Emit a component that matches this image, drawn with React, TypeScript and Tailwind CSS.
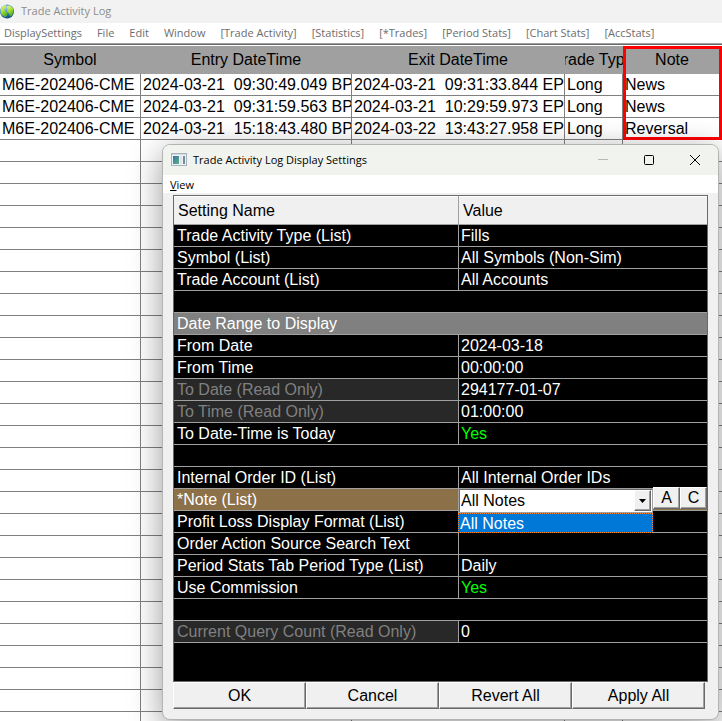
import type { ReactNode } from "react";

const menus = [
  "DisplaySettings",
  "File",
  "Edit",
  "Window",
  "[Trade Activity]",
  "[Statistics]",
  "[*Trades]",
  "[Period Stats]",
  "[Chart Stats]",
  "[AccStats]",
];

const columns = ["Symbol", "Entry DateTime", "Exit DateTime", "Trade Type", "Note"];

const trades = [
  ["M6E-202406-CME", "2024-03-21  09:30:49.049 BP", "2024-03-21  09:31:33.844 EP", "Long", "News"],
  ["M6E-202406-CME", "2024-03-21  09:31:59.563 BP", "2024-03-21  10:29:59.973 EP", "Long", "News"],
  ["M6E-202406-CME", "2024-03-21  15:18:43.480 BP", "2024-03-22  13:43:27.958 EP", "Long", "Reversal"],
];

const blankRows = Array.from({ length: 27 }, () => ["", "", "", "", ""]);

type Setting = {
  name?: string;
  value?: ReactNode;
  kind?: "section" | "blank" | "readonly" | "selected";
  on?: boolean;
};

const settings: Setting[] = [
  { name: "Trade Activity Type (List)", value: "Fills" },
  { name: "Symbol (List)", value: "All Symbols (Non-Sim)" },
  { name: "Trade Account (List)", value: "All Accounts" },
  { kind: "blank" },
  { kind: "section", name: "Date Range to Display" },
  { name: "From Date", value: "2024-03-18" },
  { name: "From Time", value: "00:00:00" },
  { name: "To Date (Read Only)", value: "294177-01-07", kind: "readonly" },
  { name: "To Time (Read Only)", value: "01:00:00", kind: "readonly" },
  { name: "To Date-Time is Today", value: "Yes", on: true },
  { kind: "blank" },
  { name: "Internal Order ID (List)", value: "All Internal Order IDs" },
  { name: "*Note (List)", kind: "selected" },
  { name: "Profit Loss Display Format (List)", value: "" },
  { name: "Order Action Source Search Text", value: "" },
  { name: "Period Stats Tab Period Type (List)", value: "Daily" },
  { name: "Use Commission", value: "Yes", on: true },
  { kind: "blank" },
  { name: "Current Query Count (Read Only)", value: "0", kind: "readonly" },
];

const uiFont = "font-['Segoe_UI','Open_Sans',sans-serif]";
const bevel =
  "border border-t-white border-l-white border-r-[#696969] border-b-[#696969] bg-[#f0f0f0] text-black shadow-[inset_-1px_-1px_0_#a0a0a0]";

function GlobeIcon() {
  return (
    <svg className="h-4 w-4" viewBox="0 0 16 16" aria-hidden="true">
      <defs>
        <radialGradient id="globe" cx="0.3" cy="0.2" r="0.9">
          <stop offset="0" stopColor="#c4e4f8" />
          <stop offset="0.4" stopColor="#3f92d0" />
          <stop offset="1" stopColor="#0c3c78" />
        </radialGradient>
        <linearGradient id="land" x1="0" y1="0" x2="0.4" y2="1">
          <stop offset="0" stopColor="#f0f69a" />
          <stop offset="0.5" stopColor="#b4e03a" />
          <stop offset="1" stopColor="#4fae26" />
        </linearGradient>
      </defs>
      <circle cx="7" cy="7.500" r="7" fill="url(#globe)" />
      <path d="M1 4.500C2 2.500 4 1 6 1L5.500 3.500 4 5 5 7 7.500 9 7 11.500 5 13.500 1.500 10.500C0.500 8 0.500 6 1 4.500Z" fill="url(#land)" />
      <path d="M6.500 2.500L9.500 1.200C12.500 2.500 13.800 5 13.500 8L12 11.500 10 12.500 9 9.500 7 7.500 7.500 5Z" fill="url(#land)" />
    </svg>
  );
}

function AppIcon() {
  return (
    <svg className="h-[14px] w-4" viewBox="0 0 16 14" aria-hidden="true">
      <defs>
        <linearGradient id="pane" x1="0" y1="0" x2="1" y2="1">
          <stop offset="0" stopColor="#3b6ea8" />
          <stop offset="1" stopColor="#5cb487" />
        </linearGradient>
      </defs>
      <rect x="0.500" y="0.500" width="15" height="12" fill="#eef2f6" stroke="#a9b3bd" />
      <rect x="1" y="1" width="14" height="1" fill="#d3dae2" />
      <rect x="2" y="3" width="6" height="8" fill="url(#pane)" />
      <rect x="9" y="3" width="2" height="8" fill="#dfe5ea" />
      <rect x="12" y="3" width="2" height="8" fill="#6f8f96" />
    </svg>
  );
}

function TradeTable() {
  return (
    <table className="w-full table-fixed border-collapse text-base leading-[21px]">
      <colgroup>
        <col className="w-[141px]" />
        <col className="w-[211px]" />
        <col className="w-[213px]" />
        <col className="w-[58px]" />
        <col />
      </colgroup>
      <thead>
        <tr className="h-7 bg-[#a0a0a0]">
          {columns.map((c) => (
            <th key={c} className="p-0 font-normal">
              <div className="flex justify-center overflow-hidden pr-px leading-5 whitespace-nowrap">
                <span className="shrink-0">{c}</span>
              </div>
            </th>
          ))}
        </tr>
      </thead>
      <tbody>
        {[...trades, ...blankRows].map((row, i) => (
          <tr key={i}>
            {row.map((cell, j) => (
              <td key={j} className="p-0">
                <div
                  className={`h-[22px] overflow-hidden border-b border-[#808080] pl-[2px] whitespace-pre ${
                    j < 4 ? "border-r" : ""
                  }`}
                >
                  {cell}
                </div>
              </td>
            ))}
          </tr>
        ))}
      </tbody>
    </table>
  );
}

function NotePicker() {
  return (
    <div className="relative flex h-[21px] bg-[#8b7048]">
      <div className="absolute -top-px right-0 left-0 flex">
        <div className="relative -ml-px w-[195px]">
          <select
            id="note-list"
            className="block h-[25px] w-full appearance-none border border-[#a0a0a0] bg-white pl-[2px] text-base leading-[21px] text-black shadow-[inset_1px_1px_0_#696969]"
          >
            <option>All Notes</option>
          </select>
          <div className={`pointer-events-none absolute top-[2px] right-[2px] flex h-[21px] w-[17px] items-center justify-center ${bevel}`}>
            <svg className="h-1 w-[7px]" viewBox="0 0 7 4" aria-hidden="true">
              <path d="M0 0H7L3.500 4Z" fill="#000" />
            </svg>
          </div>
          <ul className="absolute top-[25px] left-0 w-full" role="listbox" aria-label="Note choices">
            <li
              role="option"
              aria-selected="true"
              className="h-5 border border-dotted border-[#ff8728] bg-[#0078d7] pl-px leading-5 text-white"
            >
              All Notes
            </li>
          </ul>
        </div>
        <button type="button" className={`-mt-px h-[22px] w-[27px] text-base leading-5 ${bevel}`}>
          A
        </button>
        <button type="button" className={`-mt-px h-[22px] flex-1 text-base leading-5 ${bevel}`}>
          C
        </button>
      </div>
    </div>
  );
}

function SettingsTable() {
  return (
    <table className="w-full table-fixed border-collapse text-base leading-[21px] text-white">
      <colgroup>
        <col className="w-[285px]" />
        <col />
      </colgroup>
      <thead>
        <tr className="bg-[#f0f0f0] text-left text-black">
          <th className="p-0 font-normal">
            <div className="h-[29px] border-r border-b border-[#a0a0a0] pl-1 leading-[30px] shadow-[inset_0_1px_0_#fff]">Setting Name</div>
          </th>
          <th className="p-0 font-normal">
            <div className="h-[29px] border-b border-[#a0a0a0] pl-1 leading-[30px] shadow-[inset_0_1px_0_#fff]">Value</div>
          </th>
        </tr>
      </thead>
      <tbody>
        {settings.map((s, i) => {
          if (s.kind === "blank" || s.kind === "section") {
            return (
              <tr key={i}>
                <td colSpan={2} className="p-0">
                  <div className={`h-[22px] border-b border-[#a0a0a0] pl-[3px] ${s.kind === "section" ? "bg-[#808080]" : ""}`}>
                    {s.name}
                  </div>
                </td>
              </tr>
            );
          }
          const tone =
            s.kind === "readonly" ? "bg-[#282828] text-[#808080]" : s.kind === "selected" ? "bg-[#8b7048]" : "";
          return (
            <tr key={i}>
              <td className="p-0">
                <div className={`h-[22px] border-r border-b border-[#a0a0a0] pl-[3px] ${tone}`}>
                  {s.kind === "selected" ? <label htmlFor="note-list">{s.name}</label> : s.name}
                </div>
              </td>
              <td className="p-0">
                {s.kind === "selected" ? (
                  <div className="h-[22px] border-b border-[#a0a0a0]">
                    <NotePicker />
                  </div>
                ) : (
                  <div className={`h-[22px] border-b border-[#a0a0a0] pl-[2px] ${s.on ? "text-[#00ff00]" : ""}`}>{s.value}</div>
                )}
              </td>
            </tr>
          );
        })}
      </tbody>
    </table>
  );
}

function SettingsDialog() {
  return (
    <section
      role="dialog"
      aria-label="Trade Activity Log Display Settings"
      className="absolute top-[144px] right-[3px] left-[162px] overflow-hidden rounded-lg border border-[#b4b4b4] bg-[#f0f0f0] shadow-[0_8px_32px_rgba(0,0,0,0.4)]"
    >
      <header className={`flex h-[30px] items-center bg-[#f1f4ee] pl-2 text-[11px] text-black ${uiFont}`}>
        <AppIcon />
        <h2 className="flex-1 pl-[6px]">Trade Activity Log Display Settings</h2>
        <button type="button" aria-label="Minimize" className="flex h-full w-[46px] items-center justify-center">
          <svg className="h-3 w-3" viewBox="0 0 12 12" stroke="#b8b8b8">
            <path d="M1 5.500H11" />
          </svg>
        </button>
        <button type="button" aria-label="Maximize" className="flex h-full w-[46px] items-center justify-center">
          <svg className="h-3 w-3" viewBox="0 0 12 12" fill="none" stroke="#000">
            <rect x="1.500" y="1.500" width="9" height="9" rx="1" />
          </svg>
        </button>
        <button type="button" aria-label="Close" className="flex h-full w-[46px] items-center justify-center">
          <svg className="h-3 w-3" viewBox="0 0 12 12" stroke="#000">
            <path d="M1 1L11 11M11 1L1 11" />
          </svg>
        </button>
      </header>
      <nav className={`flex h-[18px] items-center bg-white pt-[2px] pl-[7px] text-[11px] text-black ${uiFont}`}>
        <button type="button">
          <u>V</u>iew
        </button>
      </nav>
      <div className="px-[10px] pt-[2px] pb-[10px]">
        <div className="h-[487px] border border-[#696969] bg-black">
          <SettingsTable />
        </div>
        <div className="grid grid-cols-4 pr-[3px]">
          {["OK", "Cancel", "Revert All", "Apply All"].map((b) => (
            <button key={b} type="button" className={`h-[27px] text-base leading-6 ${bevel}`}>
              {b}
            </button>
          ))}
        </div>
      </div>
    </section>
  );
}

export default function App() {
  return (
    <main className="relative h-screen overflow-hidden bg-white font-['Liberation_Sans',Arial,sans-serif] text-black">
      <header className={`flex h-[23px] items-center bg-[#f2f2f2] text-[#8c8c8c] ${uiFont}`}>
        <GlobeIcon />
        <h1 className="pl-[5px] text-[11px]">Trade Activity Log</h1>
      </header>
      <nav className={`flex h-5 items-center gap-[15px] bg-white pl-1 text-[11px] whitespace-nowrap text-[#6d6d6d] ${uiFont}`}>
        {menus.map((m) => (
          <button key={m} type="button">
            {m}
          </button>
        ))}
      </nav>
      <div className="border-t border-[#a0a0a0]">
        <div className="border-t border-[#696969] pt-px">
          <div className="relative">
            <TradeTable />
            <div className="pointer-events-none absolute top-0 right-0 h-[94px] w-[99px] border-3 border-[#ff0000]" />
          </div>
        </div>
      </div>
      <SettingsDialog />
    </main>
  );
}
